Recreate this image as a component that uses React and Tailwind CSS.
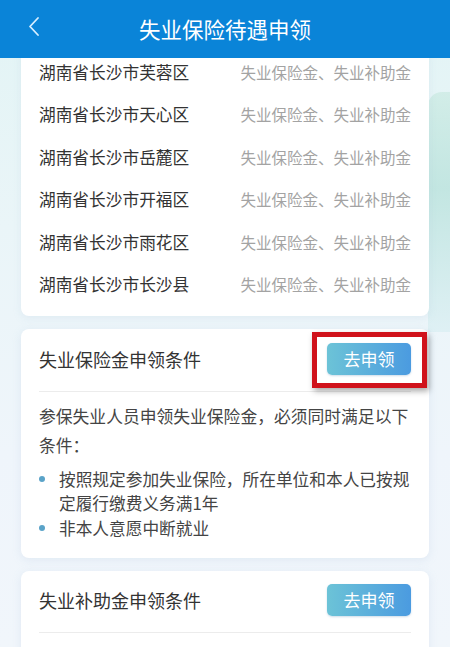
import React from 'react';

const districts = ['芙蓉区', '天心区', '岳麓区', '开福区', '雨花区', '长沙县'];

const ApplyButton = () => (
    <button className="h-[32px] w-[84px] rounded-[5px] bg-[linear-gradient(90deg,#6cc3d7,#4b9be0)] text-[17px] text-white shadow-[0_1px_2px_rgba(60,120,170,0.25)]">
        去申领
    </button>
);

const App = () => {
    return (
        <div
            className="relative h-[647px] w-[450px] overflow-hidden bg-[linear-gradient(180deg,#e2f4f5_0%,#eaf5f8_35%,#eff5fb_70%,#f1f6fb_100%)]"
            style={{ fontFamily: '"Noto Sans CJK SC", "Noto Sans", sans-serif' }}
        >
            {/* background art on the right edge */}
            <div className="absolute right-0 top-[92px] h-[240px] w-[22px] rounded-tl-[14px] bg-[linear-gradient(180deg,#cdebe4,#b9e2dc_40%,#dbeff3)] opacity-80" />

            <header className="relative z-10 flex h-[58px] items-center justify-center bg-[#0a84d8]">
                <svg className="absolute left-[27px] top-[16px]" width="14" height="21" viewBox="0 0 14 21" fill="none">
                    <path d="M11 2 L3 10.5 L11 19" stroke="#d8eeff" strokeWidth="1.8" strokeLinecap="round" strokeLinejoin="round" />
                </svg>
                <h1 className="text-[21.5px] text-white">失业保险待遇申领</h1>
            </header>

            <main className="relative flex flex-col gap-[13px] px-[21px]">
                {/* district list, scrolled under the header */}
                <div className="-mt-[7px] rounded-b-[8px] bg-white px-[18px] pb-[10px] shadow-[0_2px_8px_rgba(150,180,210,0.15)]">
                    {districts.map((d) => (
                        <div key={d} className="flex h-[42.5px] items-center justify-between">
                            <span className="text-[16.7px] text-[#333]">湖南省长沙市{d}</span>
                            <span className="text-[15.5px] text-[#a3a3a3]">失业保险金、失业补助金</span>
                        </div>
                    ))}
                </div>

                <div className="rounded-[8px] bg-white pb-[18px] pl-[18px] pr-[16px] shadow-[0_2px_10px_rgba(150,180,210,0.18)]">
                    <div className="flex items-center justify-between pb-[16px] pr-[2px] pt-[14px]">
                        <span className="text-[18px] text-[#333]">失业保险金申领条件</span>
                        <div className="relative">
                            <ApplyButton />
                            <div className="pointer-events-none absolute -bottom-[13px] -left-[15px] -right-[16px] -top-[11px] border-[5px] border-[#d0121b] shadow-[2px_3px_6px_rgba(0,0,0,0.35)]" />
                        </div>
                    </div>
                    <div className="mr-[2px] h-px bg-[#ececec]" />
                    <p className="mt-[10px] text-[16.8px] leading-[29px] text-[#444]">
                        参保失业人员申领失业保险金，必须同时满足以下条件：
                    </p>
                    <ul className="mt-[7px] text-[16.7px] leading-[24px] text-[#444]">
                        <li className="flex">
                            <span className="mr-[14px] mt-[9px] h-[6px] w-[6px] shrink-0 rounded-full bg-[#5aa3c8]" />
                            <span>按照规定参加失业保险，所在单位和本人已按规定履行缴费义务满1年</span>
                        </li>
                        <li className="mt-[1px] flex">
                            <span className="mr-[14px] mt-[9px] h-[6px] w-[6px] shrink-0 rounded-full bg-[#5aa3c8]" />
                            <span>非本人意愿中断就业</span>
                        </li>
                    </ul>
                </div>

                <div className="h-[120px] rounded-[8px] bg-white px-[18px] shadow-[0_2px_10px_rgba(150,180,210,0.18)]">
                    <div className="flex items-center justify-between pb-[16px] pt-[13px]">
                        <span className="text-[18px] text-[#333]">失业补助金申领条件</span>
                        <ApplyButton />
                    </div>
                    <div className="h-px bg-[#ececec]" />
                </div>
            </main>
        </div>
    );
};

export default App;
